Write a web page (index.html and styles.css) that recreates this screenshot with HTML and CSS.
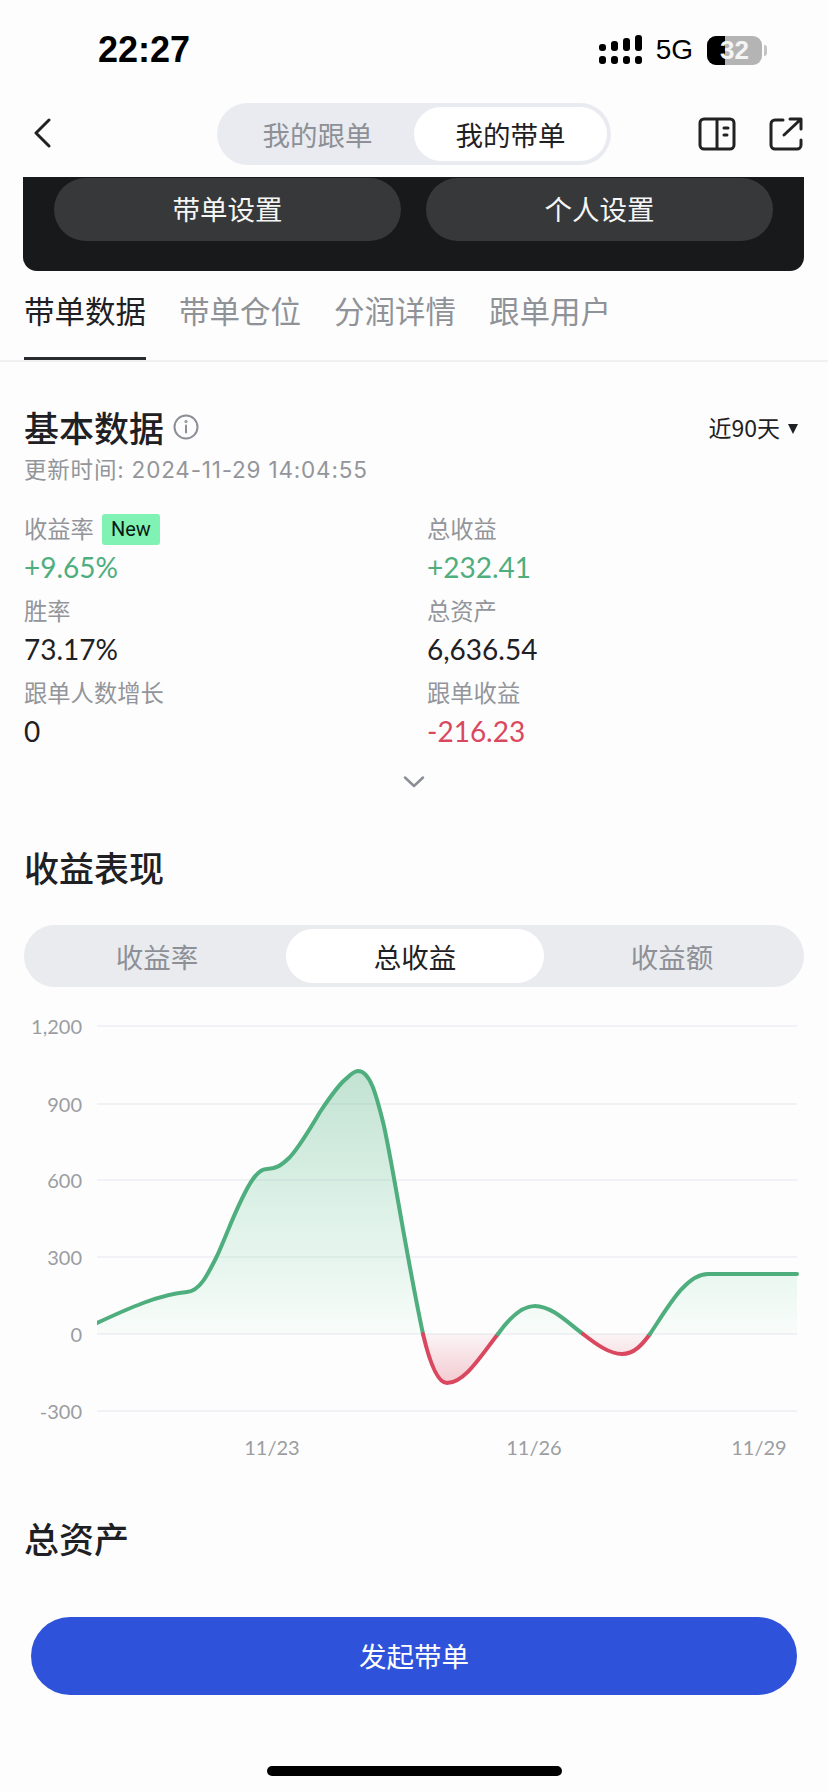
FILE: index.html
```html
<!DOCTYPE html>
<html lang="zh">
<head>
	<title>我的带单</title>
	<meta charset="UTF-8">
	<link rel="stylesheet" href="styles.css">
</head>
<body>
	<div id="page">
		<div id="status-bar">
			<span id="clock">22:27</span>
			<div id="status-right">
				<svg class="signal" width="44" height="30" viewBox="0 0 44 30">
					<rect x="0" y="9" width="7" height="7" rx="3"/><rect x="12" y="6" width="7" height="10" rx="3"/><rect x="24" y="3" width="7" height="13" rx="3"/><rect x="36" y="0" width="7" height="16" rx="3"/>
					<rect x="0" y="21" width="7" height="8" rx="3"/><rect x="12" y="21" width="7" height="8" rx="3"/><rect x="24" y="21" width="7" height="8" rx="3"/><rect x="36" y="21" width="7" height="8" rx="3"/>
				</svg>
				<span id="net">5G</span>
				<div id="battery"><span id="battery-level"></span><span id="battery-num">32</span></div>
				<span id="battery-cap"></span>
			</div>
		</div>

		<div id="top-nav">
			<svg class="back" width="20" height="30" viewBox="0 0 20 30"><path d="M16 2 3 15l13 13" fill="none" stroke="#222" stroke-width="3" stroke-linecap="round" stroke-linejoin="round"/></svg>
			<div id="switch">
				<span class="switch-item">我的跟单</span>
				<span class="switch-item on">我的带单</span>
			</div>
			<div id="nav-icons">
				<svg width="38" height="34" viewBox="0 0 38 34" fill="none" stroke="#222" stroke-width="3" stroke-linejoin="round"><rect x="2" y="2" width="34" height="30" rx="4"/><path d="M19 2v30"/><path d="M26 11h4M26 18h3" stroke-linecap="round"/></svg>
				<svg width="34" height="34" viewBox="0 0 34 34" fill="none" stroke="#222" stroke-width="3" stroke-linecap="round" stroke-linejoin="round"><path d="M14 3H6a4 4 0 0 0-4 4v21a4 4 0 0 0 4 4h22a4 4 0 0 0 4-4v-5"/><path d="M15 18 31 3M21 2h11v10"/></svg>
			</div>
		</div>

		<div id="dark-card">
			<div class="dark-btn">带单设置</div>
			<div class="dark-btn">个人设置</div>
		</div>

		<ul id="tabs">
			<li class="selected">带单数据</li>
			<li>带单仓位</li>
			<li>分润详情</li>
			<li>跟单用户</li>
		</ul>

		<div id="basic">
			<div id="basic-head">
				<h2 class="title">基本数据</h2>
				<svg class="info" width="26" height="26" viewBox="0 0 26 26" fill="none" stroke="#8b8e94" stroke-width="2"><circle cx="13" cy="13" r="11.5"/><path d="M13 11.5v7" stroke-linecap="round"/><circle cx="13" cy="7.5" r="0.6"/></svg>
				<div id="range">近90天<span id="range-arrow"></span></div>
			</div>
			<div id="update-time">更新时间: 2024-11-29 14:04:55</div>
			<div id="stats">
				<div class="stat">
					<div class="label">收益率<span id="new-tag">New</span></div>
					<div class="value green">+9.65%</div>
				</div>
				<div class="stat">
					<div class="label">总收益</div>
					<div class="value green">+232.41</div>
				</div>
				<div class="stat">
					<div class="label">胜率</div>
					<div class="value">73.17%</div>
				</div>
				<div class="stat">
					<div class="label">总资产</div>
					<div class="value">6,636.54</div>
				</div>
				<div class="stat">
					<div class="label">跟单人数增长</div>
					<div class="value">0</div>
				</div>
				<div class="stat">
					<div class="label">跟单收益</div>
					<div class="value red">-216.23</div>
				</div>
			</div>
			<svg id="more" width="22" height="12" viewBox="0 0 22 12"><path d="M2 1.500 11 10l9-8.500" fill="none" stroke="#8b8e94" stroke-width="2.500" stroke-linecap="round" stroke-linejoin="round"/></svg>
		</div>

		<h2 class="title" id="perf-title">收益表现</h2>
		<div id="perf-switch">
			<span class="perf-item">收益率</span>
			<span class="perf-item on">总收益</span>
			<span class="perf-item">收益额</span>
		</div>

		<div id="chart">
			<div id="y-labels">
				<span>1,200</span><span>900</span><span>600</span><span>300</span><span>0</span><span>-300</span>
			</div>
			<svg id="plot" width="702" height="402" viewBox="97 1022 702 402">
				<defs>
					<linearGradient id="up" gradientUnits="userSpaceOnUse" x1="0" y1="1072" x2="0" y2="1335">
						<stop offset="0" stop-color="#4fae7e" stop-opacity=".34"/>
						<stop offset=".75" stop-color="#63c896" stop-opacity=".14"/>
						<stop offset="1" stop-color="#7ee0ae" stop-opacity=".04"/>
					</linearGradient>
					<linearGradient id="down" gradientUnits="userSpaceOnUse" x1="0" y1="1335" x2="0" y2="1384">
						<stop offset="0" stop-color="#d9485f" stop-opacity=".05"/>
						<stop offset="1" stop-color="#d9485f" stop-opacity=".28"/>
					</linearGradient>
				</defs>
				<path stroke="#f1f2f5" stroke-width="2" d="M97 1027H797M97 1105H797M97 1181H797M97 1258H797M97 1335H797M97 1412H797"/>
				<path fill="url(#up)" d="M97 1324C127 1310 160 1295 187 1293C200 1292 208 1275 217 1257C228 1233 240 1198 253 1180C258 1173 262 1170 267 1170C275 1170 281 1167 290 1158C300 1147 310 1130 320 1113C330 1098 340 1084 347 1079C351 1075 355 1072 358 1072C370 1072 376 1095 383 1123C392 1160 405 1250 423 1335H97Z"/>
				<path fill="url(#down)" d="M423 1335C430 1365 438 1384 447 1384C465 1384 482 1355 498 1335Z"/>
				<path fill="url(#up)" d="M498 1335C510 1318 522 1307 535 1307C552 1307 568 1324 583 1335Z"/>
				<path fill="url(#down)" d="M583 1335C597 1346 610 1355 622 1355C634 1355 642 1346 650 1335Z"/>
				<path fill="url(#up)" d="M650 1335C668 1308 686 1275 708 1275H797V1335Z"/>
				<g fill="none" stroke-width="4" stroke-linecap="round">
					<path stroke="#4fae7e" d="M97 1324C127 1310 160 1295 187 1293C200 1292 208 1275 217 1257C228 1233 240 1198 253 1180C258 1173 262 1170 267 1170C275 1170 281 1167 290 1158C300 1147 310 1130 320 1113C330 1098 340 1084 347 1079C351 1075 355 1072 358 1072C370 1072 376 1095 383 1123C392 1160 405 1250 423 1335"/>
					<path stroke="#d9485f" d="M423 1335C430 1365 438 1384 447 1384C465 1384 482 1355 498 1335"/>
					<path stroke="#4fae7e" d="M498 1335C510 1318 522 1307 535 1307C552 1307 568 1324 583 1335"/>
					<path stroke="#d9485f" d="M583 1335C597 1346 610 1355 622 1355C634 1355 642 1346 650 1335"/>
					<path stroke="#4fae7e" d="M650 1335C668 1308 686 1275 708 1275H797"/>
				</g>
			</svg>
			<div id="x-labels">
				<span>11/23</span><span>11/26</span><span>11/29</span>
			</div>
		</div>

		<h2 class="title" id="assets-title">总资产</h2>

		<div id="start-btn">发起带单</div>
		<div id="home-bar"></div>
	</div>
</body>
</html>
```

FILE: styles.css
```css
*{
	margin: 0;
	padding: 0;
	box-sizing: border-box;
}
ul{
	list-style: none;
}
body{
	background: #fdfdfd;
	font-family: "Noto Sans CJK SC", "Liberation Sans", sans-serif;
	color: #1f2023;
}
#page{
	width: 828px;
	height: 1792px;
	overflow: hidden;
}
#status-bar{
	height: 103px;
	padding: 28px 0 0 98px;
	display: flex;
	justify-content: space-between;
	align-items: flex-start;
}
#clock{
	font-family: "Liberation Sans", sans-serif;
	font-size: 36px;
	line-height: 44px;
	font-weight: bold;
	color: #000;
}
#status-right{
	display: flex;
	align-items: center;
	height: 44px;
	padding-right: 61px;
}
.signal{
	fill: #000;
	margin-right: 13px;
}
#net{
	font-family: "Liberation Sans", sans-serif;
	font-size: 28px;
	color: #000;
	margin-right: 14px;
}
#battery{
	width: 55px;
	height: 29px;
	border-radius: 9px;
	background: #b4b4b4;
	overflow: hidden;
	position: relative;
}
#battery-level{
	position: absolute;
	left: 0;
	top: 0;
	bottom: 0;
	width: 18px;
	background: #000;
}
#battery-num{
	position: absolute;
	left: 0;
	right: 0;
	top: 0;
	text-align: center;
	font-family: "Liberation Sans", sans-serif;
	font-size: 26px;
	line-height: 29px;
	font-weight: bold;
	color: #f4f4f4;
}
#battery-cap{
	width: 3px;
	height: 11px;
	margin-left: 2px;
	background: #c4c4c4;
	border-radius: 0 3px 3px 0;
}
#top-nav{
	height: 74px;
	display: flex;
	align-items: flex-start;
}
.back{
	margin: 15px 0 0 33px;
}
#switch{
	width: 394px;
	height: 62px;
	margin-left: 164px;
	padding: 4px;
	background: #e9ebf0;
	border-radius: 31px;
	display: flex;
	align-items: stretch;
	font-size: 27.500px;
}
.switch-item{
	flex: 1;
	display: flex;
	align-items: center;
	justify-content: center;
	color: #8d9096;
	border-radius: 27px;
}
.switch-item.on{
	background: #fff;
	color: #1f2023;
}
#nav-icons{
	display: flex;
	gap: 33px;
	margin: 14px 0 0 87px;
}
#dark-card{
	width: 781px;
	height: 94px;
	margin: 0 0 0 23px;
	padding: 1px 31px 0;
	background: #18191a;
	border-radius: 0 0 14px 14px;
	display: flex;
	gap: 25px;
	align-items: flex-start;
}
.dark-btn{
	width: 347px;
	height: 63px;
	line-height: 61px;
	text-align: center;
	background: #36383a;
	border-radius: 32px;
	color: #f5f5f5;
	font-size: 27.500px;
}
#tabs{
	height: 91px;
	padding-left: 24px;
	display: flex;
	gap: 33px;
	border-bottom: 2px solid #f0f0f2;
	font-size: 30.500px;
	color: #8f9297;
}
#tabs li{
	width: 122px;
	padding-top: 17px;
	line-height: 44px;
	white-space: nowrap;
	height: 89px;
}
#tabs .selected{
	color: #1f2023;
	border-bottom: 3px solid #2a2b2e;
}
#basic{
	padding: 43px 30px 0 24px;
}
#basic-head{
	display: flex;
	align-items: center;
	height: 44px;
}
.title{
	font-size: 35px;
	line-height: 44px;
	font-weight: 500;
	color: #1f2023;
}
.info{
	margin-left: 9px;
}
#range{
	margin-left: auto;
	font-size: 23px;
	display: flex;
	align-items: center;
}
#range-arrow{
	width: 0;
	height: 0;
	margin: 3px 0 0 8px;
	border-left: 5px solid transparent;
	border-right: 5px solid transparent;
	border-top: 10px solid #1f2023;
}
#update-time{
	font-family: "Inter", "Noto Sans CJK SC", sans-serif;
	font-size: 22.500px;
	letter-spacing: .8px;
	line-height: 32px;
	margin-top: 5px;
	color: #93959a;
}
#stats{
	margin-top: 23px;
	display: grid;
	grid-template-columns: 403px 1fr;
}
.stat{
	height: 82px;
}
.label{
	height: 40px;
	padding-bottom: 2px;
	display: flex;
	align-items: center;
	font-size: 23.300px;
	color: #93959a;
}
#new-tag{
	width: 58px;
	height: 31px;
	margin: 2px 0 0 8px;
	background: #7ff2b4;
	border-radius: 3px;
	color: #0c1a12;
	font-family: "Roboto", sans-serif;
	font-size: 20px;
	line-height: 31px;
	text-align: center;
}
.value{
	font-family: "Lato", "Liberation Sans", sans-serif;
	font-size: 28px;
	line-height: 36px;
	color: #1f2023;
}
.green{
	color: #4fae7e;
}
.red{
	color: #d9485f;
}
#more{
	display: block;
	margin: 21px 0 0 379px;
}
#perf-title{
	margin: 57px 0 0 24px;
}
#perf-switch{
	width: 780px;
	height: 62px;
	margin: 36px 0 0 24px;
	padding: 4px;
	background: #e9ebef;
	border-radius: 31px;
	display: grid;
	grid-template-columns: 258px 258px 1fr;
	font-size: 27.500px;
}
.perf-item{
	display: flex;
	align-items: center;
	justify-content: center;
	color: #8d9096;
	border-radius: 27px;
}
.perf-item.on{
	background: #fff;
	color: #1f2023;
}
#chart{
	height: 503px;
	margin-top: 26px;
	position: relative;
}
#plot{
	position: absolute;
	left: 97px;
	top: 8px;
}
#y-labels span,
#x-labels span{
	position: absolute;
	font-family: "Lato", "Liberation Sans", sans-serif;
	font-size: 20px;
	line-height: 24px;
	color: #9b9da2;
}
#y-labels span{
	right: 746px;
}
#y-labels span:nth-child(1){ top: 1px; }
#y-labels span:nth-child(2){ top: 79px; }
#y-labels span:nth-child(3){ top: 155px; }
#y-labels span:nth-child(4){ top: 232px; }
#y-labels span:nth-child(5){ top: 309px; }
#y-labels span:nth-child(6){ top: 386px; }
#x-labels span{
	top: 422px;
	transform: translateX(-50%);
}
#x-labels span:nth-child(1){ left: 272px; }
#x-labels span:nth-child(2){ left: 534px; }
#x-labels span:nth-child(3){ left: 759px; }
#assets-title{
	margin: 0 0 0 24px;
}
#start-btn{
	width: 766px;
	height: 78px;
	margin: 57px 0 0 31px;
	line-height: 76px;
	text-align: center;
	background: #2f52da;
	border-radius: 39px;
	color: #fff;
	font-size: 27.500px;
}
#home-bar{
	width: 295px;
	height: 10px;
	margin: 71px 0 0 267px;
	background: #000;
	border-radius: 5px;
}
```
